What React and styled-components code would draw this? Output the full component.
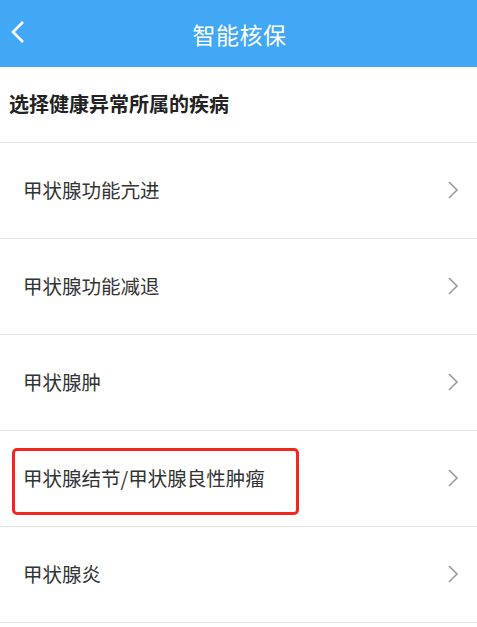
import React from 'react';
import styled, { createGlobalStyle } from 'styled-components';

const GlobalStyle = createGlobalStyle`
  body {
    margin: 0;
    background: #fff;
    font-family: "Noto Sans CJK SC", "Noto Sans", sans-serif;
  }
`;

const diseases = [
  { name: '甲状腺功能亢进' },
  { name: '甲状腺功能减退' },
  { name: '甲状腺肿' },
  { name: '甲状腺结节/甲状腺良性肿瘤', marked: true },
  { name: '甲状腺炎' },
];

const App = () => {
  return (
    <Page>
      <GlobalStyle />
      <Header>
        <BackButton>
          <svg width="16" height="24" viewBox="0 0 16 24">
            <path d="M13 2 L3 12 L13 22" fill="none" stroke="#fff" strokeWidth="2.6" />
          </svg>
        </BackButton>
        <Title>智能核保</Title>
      </Header>
      <SectionTitle>选择健康异常所属的疾病</SectionTitle>
      <List>
        {diseases.map((d) => (
          <Row key={d.name}>
            <RowText>{d.name}</RowText>
            <svg width="12" height="20" viewBox="0 0 12 20">
              <path d="M2 2 L10 10 L2 18" fill="none" stroke="#9a9a9a" strokeWidth="1.6" />
            </svg>
            {d.marked && <Highlight />}
          </Row>
        ))}
      </List>
    </Page>
  );
};

const Page = styled.div`
  width: 477px;
  min-height: 627px;
  background: #fff;
`;

const Header = styled.div`
  position: relative;
  height: 67px;
  background: #42a8f6;
  display: flex;
  align-items: center;
  justify-content: center;
`;

const BackButton = styled.div`
  position: absolute;
  left: 10px;
  top: 20px;
  display: flex;
`;

const Title = styled.h1`
  margin: 0;
  padding-left: 2px;
  font-size: 23px;
  font-weight: 400;
  color: #fff;
  letter-spacing: 0.5px;
`;

const SectionTitle = styled.div`
  height: 76px;
  display: flex;
  align-items: center;
  padding-left: 9px;
  padding-bottom: 2px;
  box-sizing: border-box;
  font-size: 20px;
  font-weight: 700;
  color: #222;
  border-bottom: 1px solid #e2e2e2;
`;

const List = styled.div`
  display: flex;
  flex-direction: column;
`;

const Row = styled.div`
  position: relative;
  height: 93px;
  display: flex;
  align-items: center;
  justify-content: space-between;
  padding: 0 18px 2px 23px;
  box-sizing: content-box;
  border-bottom: 1px solid #e2e2e2;
`;

const RowText = styled.span`
  font-size: 19.5px;
  color: #333;
`;

const Highlight = styled.div`
  position: absolute;
  left: 12px;
  top: 17px;
  width: 287px;
  height: 67px;
  box-sizing: border-box;
  border: 3px solid #f0261f;
  border-radius: 5px;
`;

export default App;
